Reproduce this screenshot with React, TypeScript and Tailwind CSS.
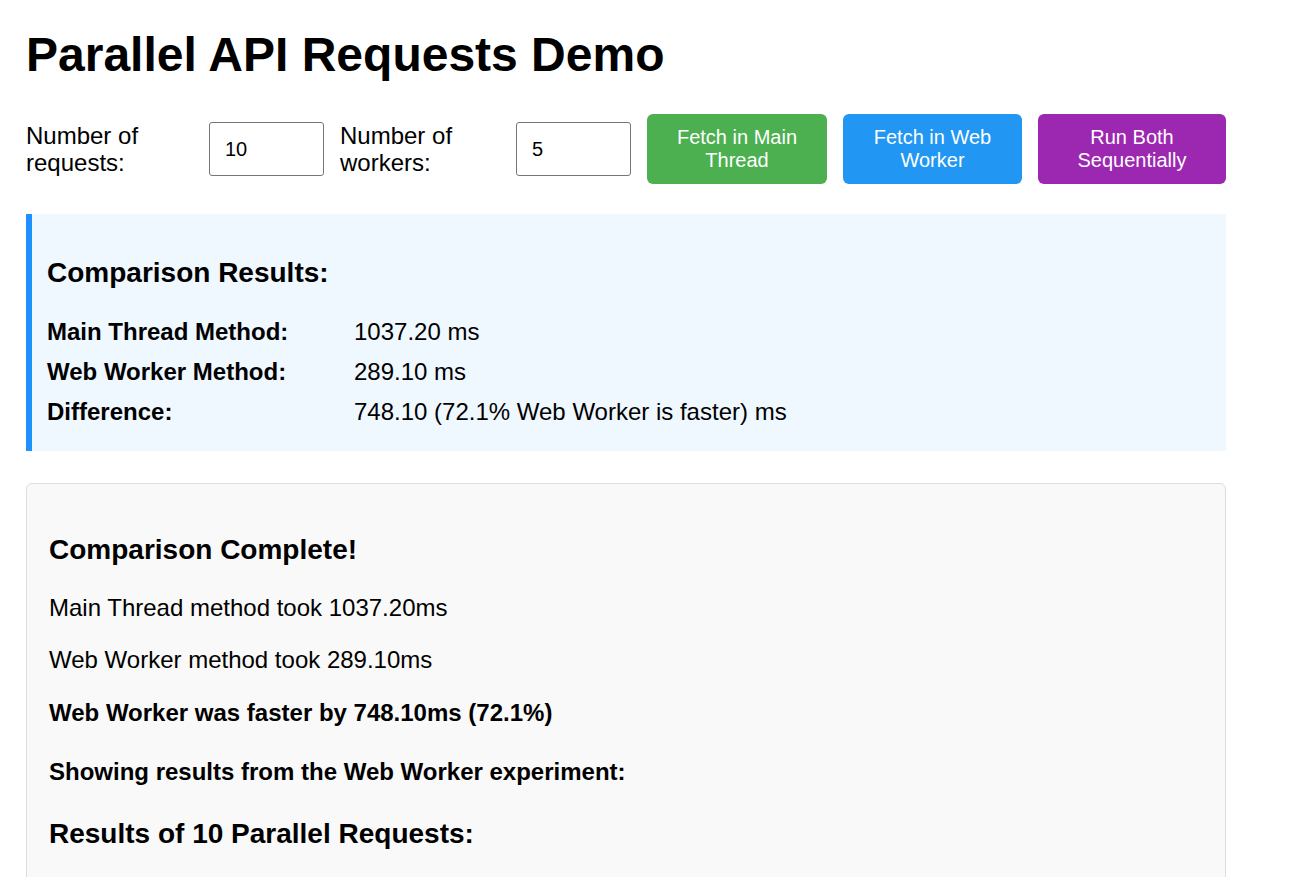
import { useState } from "react";

const results = {
    main: 1037.2,
    worker: 289.1,
};

export default function App() {

    const [requests, setRequests] = useState("10");

    const [workers, setWorkers] = useState("5");

    const diff = results.main - results.worker;

    const pct = ((diff / results.main) * 100).toFixed(1);

    return (

        <div className="min-h-screen bg-white font-['Liberation_Sans',Arial,sans-serif] text-[24px] leading-[1.15] text-black">

            <div className="w-[1200px] ml-[26px] pt-[27px]">

                <h1 className="m-0 text-[48px] font-bold leading-[1.15]">
                    Parallel API Requests Demo
                </h1>

                {/* Controls */}

                <div className="mt-[32px] flex items-center gap-4">

                    <label htmlFor="requests" className="w-[167px] shrink-0">
                        Number of requests:
                    </label>

                    <input
                        id="requests"
                        type="number"
                        value={requests}
                        onChange={(e) => setRequests(e.target.value)}
                        className="h-[54px] w-[115px] shrink-0 rounded-[3px] border border-[#767676] bg-white px-[15px] text-[20px] outline-none [appearance:textfield]"
                    />

                    <label htmlFor="workers" className="w-[160px] shrink-0">
                        Number of workers:
                    </label>

                    <input
                        id="workers"
                        type="number"
                        value={workers}
                        onChange={(e) => setWorkers(e.target.value)}
                        className="h-[54px] w-[115px] shrink-0 rounded-[3px] border border-[#767676] bg-white px-[15px] text-[20px] outline-none [appearance:textfield]"
                    />

                    <button className="h-[70px] w-[180px] shrink-0 rounded-[6px] bg-[#4caf50] px-[24px] text-[20px] leading-[1.15] text-white">
                        Fetch in Main Thread
                    </button>

                    <button className="h-[70px] w-[179px] shrink-0 rounded-[6px] bg-[#2196f3] px-[30px] text-[20px] leading-[1.15] text-white">
                        Fetch in Web Worker
                    </button>

                    <button className="h-[70px] w-[188px] shrink-0 rounded-[6px] bg-[#9c27b0] px-[30px] text-[20px] leading-[1.15] text-white">
                        Run Both Sequentially
                    </button>

                </div>

                {/* Comparison table */}

                <div className="mt-[30px] border-l-[6px] border-[#1e90ff] bg-[#eff7ff] pb-[19px] pl-[15px] pt-[43px]">

                    <h3 className="text-[28px] font-bold leading-[32px]">
                        Comparison Results:
                    </h3>

                    <div className="mt-[23px] grid grid-cols-[307px_1fr]">

                        <div className="flex h-10 items-center font-bold">Main Thread Method:</div>
                        <div className="flex h-10 items-center">{results.main.toFixed(2)} ms</div>

                        <div className="flex h-10 items-center font-bold">Web Worker Method:</div>
                        <div className="flex h-10 items-center">{results.worker.toFixed(2)} ms</div>

                        <div className="flex h-10 items-center font-bold">Difference:</div>
                        <div className="flex h-10 items-center">
                            {diff.toFixed(2)} ({pct}% Web Worker is faster) ms
                        </div>

                    </div>

                </div>

                {/* Summary */}

                <div className="mt-[32px] rounded-[6px] border border-[#dddddd] bg-[#f9f9f9] px-[22px] pb-[200px] pt-[50px]">

                    <h3 className="text-[28px] font-bold leading-[32px]">
                        Comparison Complete!
                    </h3>

                    <p className="mt-[28px]">Main Thread method took {results.main.toFixed(2)}ms</p>

                    <p className="mt-[24px]">Web Worker method took {results.worker.toFixed(2)}ms</p>

                    <p className="mt-[26px] font-bold">
                        Web Worker was faster by {diff.toFixed(2)}ms ({pct}%)
                    </p>

                    <h4 className="mt-[31px] font-bold">
                        Showing results from the Web Worker experiment:
                    </h4>

                    <h3 className="mt-[32px] text-[28px] font-bold leading-[32px]">
                        Results of {requests} Parallel Requests:
                    </h3>

                </div>

            </div>

        </div>

    );

}
